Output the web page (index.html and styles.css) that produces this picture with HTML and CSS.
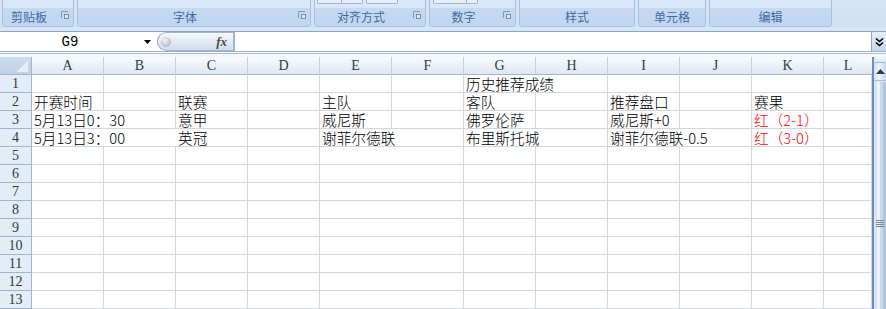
FILE: index.html
```html
<!DOCTYPE html>
<html lang="zh-CN">
<head>
<meta charset="utf-8">
<title>Excel</title>
<link rel="stylesheet" href="styles.css">
</head>
<body>
<div class="app">
  <div class="ribbon">
    <div class="group w-clip">
      <div class="gtop"></div>
      <div class="glabel"><span class="lt">剪贴板</span><span class="launch"><svg width="8" height="8" viewBox="0 0 8 8"><path d="M0.5 7V0.5H7" fill="none" stroke="#7a97c0"/><rect x="3" y="3" width="5" height="5" fill="#7a8ea8"/><rect x="4" y="4" width="3" height="3" fill="#dfe8f4"/></svg></span></div>
    </div>
    <div class="group w-font">
      <div class="gtop"></div>
      <div class="glabel"><span class="lt">字体</span><span class="launch"><svg width="8" height="8" viewBox="0 0 8 8"><path d="M0.5 7V0.5H7" fill="none" stroke="#7a97c0"/><rect x="3" y="3" width="5" height="5" fill="#7a8ea8"/><rect x="4" y="4" width="3" height="3" fill="#dfe8f4"/></svg></span></div>
    </div>
    <div class="group w-align">
      <div class="gtop"><span class="tb tb1"><span class="tbdiv"></span></span><span class="tb tb2"></span></div>
      <div class="glabel"><span class="lt">对齐方式</span><span class="launch"><svg width="8" height="8" viewBox="0 0 8 8"><path d="M0.5 7V0.5H7" fill="none" stroke="#7a97c0"/><rect x="3" y="3" width="5" height="5" fill="#7a8ea8"/><rect x="4" y="4" width="3" height="3" fill="#dfe8f4"/></svg></span></div>
    </div>
    <div class="group w-num">
      <div class="gtop"><span class="tb tb3"><span class="tbdiv tbdiv3"></span></span></div>
      <div class="glabel"><span class="lt">数字</span><span class="launch"><svg width="8" height="8" viewBox="0 0 8 8"><path d="M0.5 7V0.5H7" fill="none" stroke="#7a97c0"/><rect x="3" y="3" width="5" height="5" fill="#7a8ea8"/><rect x="4" y="4" width="3" height="3" fill="#dfe8f4"/></svg></span></div>
    </div>
    <div class="group w-style">
      <div class="gtop"></div>
      <div class="glabel nol"><span class="lt">样式</span></div>
    </div>
    <div class="group w-cell">
      <div class="gtop"></div>
      <div class="glabel nol"><span class="lt">单元格</span></div>
    </div>
    <div class="group w-edit">
      <div class="gtop"></div>
      <div class="glabel nol"><span class="lt">编辑</span></div>
    </div>
  </div>
  <div class="ribbon-foot"></div>

  <div class="fbar">
    <div class="namebox"><span class="nbtext">G9</span><span class="dd"><svg width="7" height="4" viewBox="0 0 7 4"><path d="M0 0H7L3.5 4Z" fill="#000"/></svg></span></div>
    <div class="fxbtn"><span class="knob"></span><span class="fx">fx</span></div>
    <div class="finput"></div>
    <div class="expand"><svg width="9" height="10" viewBox="0 0 9 10"><path d="M1 1.5L4.5 4.5L8 1.5M1 5.5L4.5 8.5L8 5.5" fill="none" stroke="#000" stroke-width="1.6"/></svg></div>
  </div>
  <div class="fgap"></div>

  <div class="sheetwrap">
    <div class="sheet">
      <div class="corner"></div>
      <div class="ch">A</div><div class="ch">B</div><div class="ch">C</div><div class="ch">D</div><div class="ch">E</div><div class="ch">F</div><div class="ch">G</div><div class="ch">H</div><div class="ch">I</div><div class="ch">J</div><div class="ch">K</div><div class="ch chl">L</div>

      <div class="rh">1</div>
      <div class="c"></div><div class="c"></div><div class="c"></div><div class="c"></div><div class="c"></div><div class="c"></div><div class="c s2">历史推荐成绩</div><div class="c"></div><div class="c"></div><div class="c"></div><div class="c"></div>

      <div class="rh">2</div>
      <div class="c">开赛时间</div><div class="c"></div><div class="c">联赛</div><div class="c"></div><div class="c">主队</div><div class="c"></div><div class="c">客队</div><div class="c"></div><div class="c">推荐盘口</div><div class="c"></div><div class="c">赛果</div><div class="c"></div>

      <div class="rh">3</div>
      <div class="c s2">5月13日0：30</div><div class="c">意甲</div><div class="c"></div><div class="c">威尼斯</div><div class="c"></div><div class="c">佛罗伦萨</div><div class="c"></div><div class="c">威尼斯+0</div><div class="c"></div><div class="c red">红（2-1）</div><div class="c"></div>

      <div class="rh">4</div>
      <div class="c s2">5月13日3：00</div><div class="c">英冠</div><div class="c"></div><div class="c s2">谢菲尔德联</div><div class="c s2">布里斯托城</div><div class="c s2">谢菲尔德联-0.5</div><div class="c red">红（3-0）</div><div class="c"></div>

      <div class="rh">5</div><div class="c"></div><div class="c"></div><div class="c"></div><div class="c"></div><div class="c"></div><div class="c"></div><div class="c"></div><div class="c"></div><div class="c"></div><div class="c"></div><div class="c"></div><div class="c"></div>
      <div class="rh">6</div><div class="c"></div><div class="c"></div><div class="c"></div><div class="c"></div><div class="c"></div><div class="c"></div><div class="c"></div><div class="c"></div><div class="c"></div><div class="c"></div><div class="c"></div><div class="c"></div>
      <div class="rh">7</div><div class="c"></div><div class="c"></div><div class="c"></div><div class="c"></div><div class="c"></div><div class="c"></div><div class="c"></div><div class="c"></div><div class="c"></div><div class="c"></div><div class="c"></div><div class="c"></div>
      <div class="rh">8</div><div class="c"></div><div class="c"></div><div class="c"></div><div class="c"></div><div class="c"></div><div class="c"></div><div class="c"></div><div class="c"></div><div class="c"></div><div class="c"></div><div class="c"></div><div class="c"></div>
      <div class="rh">9</div><div class="c"></div><div class="c"></div><div class="c"></div><div class="c"></div><div class="c"></div><div class="c"></div><div class="c"></div><div class="c"></div><div class="c"></div><div class="c"></div><div class="c"></div><div class="c"></div>
      <div class="rh">10</div><div class="c"></div><div class="c"></div><div class="c"></div><div class="c"></div><div class="c"></div><div class="c"></div><div class="c"></div><div class="c"></div><div class="c"></div><div class="c"></div><div class="c"></div><div class="c"></div>
      <div class="rh">11</div><div class="c"></div><div class="c"></div><div class="c"></div><div class="c"></div><div class="c"></div><div class="c"></div><div class="c"></div><div class="c"></div><div class="c"></div><div class="c"></div><div class="c"></div><div class="c"></div>
      <div class="rh">12</div><div class="c"></div><div class="c"></div><div class="c"></div><div class="c"></div><div class="c"></div><div class="c"></div><div class="c"></div><div class="c"></div><div class="c"></div><div class="c"></div><div class="c"></div><div class="c"></div>
      <div class="rh">13</div><div class="c"></div><div class="c"></div><div class="c"></div><div class="c"></div><div class="c"></div><div class="c"></div><div class="c"></div><div class="c"></div><div class="c"></div><div class="c"></div><div class="c"></div><div class="c"></div>
    </div>
    <div class="vscroll">
      <div class="split"></div>
      <div class="sup"><svg width="9" height="5" viewBox="0 0 9 5"><path d="M0 5H9L4.5 0Z" fill="#2b3a4e"/></svg></div>
      <div class="thumb"><span class="grip"></span></div>
    </div>
  </div>
</div>
</body>
</html>
```

FILE: styles.css
```css
* { box-sizing: border-box; }
html, body { margin: 0; padding: 0; }
body {
  width: 886px;
  height: 309px;
  overflow: hidden;
  background: #ffffff;
  font-family: "Noto Sans CJK SC", "Noto Sans", sans-serif;
}
.app { width: 886px; height: 309px; overflow: hidden; }

/* Ribbon */
.ribbon {
  height: 27px;
  display: flex;
  gap: 3px;
  padding-left: 2px;
  background: linear-gradient(#d7e6f7, #cfe0f3);
}
.group {
  height: 27px;
  display: flex;
  flex-direction: column;
  border: 1px solid #a4c0e4;
  border-top: none;
  border-radius: 0 0 4px 4px;
  overflow: hidden;
}
.w-clip { width: 72px; }
.w-font { width: 234px; }
.w-align { width: 112px; }
.w-num { width: 87px; }
.w-style { width: 116px; }
.w-cell { width: 68px; }
.w-edit { width: 123px; }
.gtop {
  height: 8px;
  display: flex;
  background: #d9e8f9;
}
.tb {
  height: 4px;
  border: 1px solid #9fb6d4;
  border-top: none;
  border-radius: 0 0 2px 2px;
  background: #e6eef8;
  display: flex;
}
.tb1 { width: 46px; margin-left: 2px; }
.tb2 { width: 32px; margin-left: 3px; }
.tb3 { width: 45px; margin-left: 3px; }
.tbdiv { width: 1px; height: 3px; background: #9fb6d4; margin-left: 23px; }
.tbdiv3 { margin-left: 32px; }
.glabel {
  flex: 1;
  display: flex;
  align-items: center;
  background: linear-gradient(#c5daf1, #c1d6ef);
  padding-bottom: 1px;
}
.lt {
  flex: 1;
  text-align: center;
  font-size: 12px;
  line-height: 14px;
  color: #3e69a5;
}
.launch {
  width: 18px;
  display: flex;
  align-items: center;
  justify-content: flex-end;
  padding-right: 4px;
  padding-bottom: 3px;
}
.ribbon-foot {
  height: 5px;
  background: #d7e4f3;
  border-bottom: 1px solid #8fa7c6;
}

/* Formula bar */
.fbar {
  height: 20px;
  display: flex;
  background: #ffffff;
  border-bottom: 1px solid #9fb2cc;
}
.namebox {
  width: 157px;
  display: flex;
  align-items: center;
}
.nbtext {
  width: 140px;
  text-align: center;
  font-family: "Liberation Mono", monospace;
  font-size: 14px;
  line-height: 16px;
  color: #000;
}
.dd { margin-left: 4px; display: flex; }
.fxbtn {
  width: 77px;
  display: flex;
  align-items: center;
  justify-content: space-between;
  border: 1px solid #a1b4cf;
  border-left: 1px solid #8ea4c2;
  border-radius: 10px 0 0 10px;
  background: linear-gradient(#f7f9fc, #dfe7f2 60%, #d2ddec);
  padding: 0 6px 0 3px;
}
.knob {
  width: 10px;
  height: 10px;
  border-radius: 50%;
  background: radial-gradient(circle at 40% 35%, #f4f4f4, #b9bcc1 70%, #9ea3aa);
}
.fx {
  font-family: "Liberation Serif", serif;
  font-style: italic;
  font-weight: bold;
  font-size: 13px;
  line-height: 14px;
  color: #4a4a4a;
}
.finput { flex: 1; border-left: 1px solid #a1b4cf; }
.expand {
  width: 15px;
  display: flex;
  align-items: center;
  justify-content: center;
  background: linear-gradient(#e6eef8, #c4d6ec);
  border-left: 1px solid #8fa5c3;
}
.fgap {
  height: 5px;
  background: linear-gradient(#ffffff 0 1px, #a9bcd5 1px 2px, #f3f6fa 2px);
}

/* Sheet */
.sheetwrap { display: flex; }
.sheet {
  width: 872px;
  display: grid;
  grid-template-columns: 32px repeat(11, 72px) 48px;
  grid-auto-rows: 18px;
}
.corner {
  border-right: 1px solid #9eb6ce;
  border-bottom: 1px solid #9eb6ce;
  background:
    linear-gradient(135deg, transparent 0 50%, #e9eef5 50%) no-repeat 17px 4px / 11px 11px,
    linear-gradient(#cddcee, #bfd1e8);
}
.ch {
  border-right: 1px solid #c3d1e2;
  border-bottom: 1px solid #9eb6ce;
  background: linear-gradient(#f9fbfd, #e9eff7 60%, #dfe7f1);
  text-align: center;
  font-family: "Liberation Serif", serif;
  font-size: 14px;
  line-height: 17px;
  color: #27413e;
}
.ch.chl { border-right: none; }
.rh {
  border-right: 1px solid #9eb6ce;
  border-bottom: 1px solid #9eb6ce;
  background: #e4ecf7;
  text-align: center;
  font-family: "Liberation Serif", serif;
  font-size: 14px;
  line-height: 17px;
  color: #27413e;
}
.c {
  border-right: 1px solid #d0d7e5;
  border-bottom: 1px solid #d0d7e5;
  padding-left: 2px;
  white-space: nowrap;
  font-size: 14.67px;
  font-weight: 300;
  line-height: 17px;
  color: #000;
}
.c:nth-child(13n) { border-right: none; }
.s2 { grid-column: span 2; }
.red { color: #ff0000; }

.vscroll {
  width: 14px;
  border-left: 2px solid #6c8cc0;
  display: flex;
  flex-direction: column;
  background: #dde7f3;
}
.split {
  height: 6px;
  background: linear-gradient(#f4f7fb, #dfe8f3);
  border-bottom: 1px solid #9fb4cf;
  margin: 0 1px;
}
.sup {
  height: 18px;
  display: flex;
  align-items: center;
  justify-content: center;
  background: linear-gradient(90deg, #d8e3f1, #eef3f9 45%, #c7d6ea);
  border-bottom: 1px solid #a9bdd7;
}
.thumb {
  flex: 1;
  margin-top: 1px;
  background: linear-gradient(90deg, #d9e4f2 0 3px, #edf2f9 3px 6px, #c9d8eb 6px 9px, #b4c6df 9px);
  position: relative;
}
.grip {
  position: absolute;
  left: 2px;
  top: 138px;
  width: 8px;
  height: 7px;
  background: repeating-linear-gradient(#7d8692 0 1px, transparent 1px 2px);
}
```
